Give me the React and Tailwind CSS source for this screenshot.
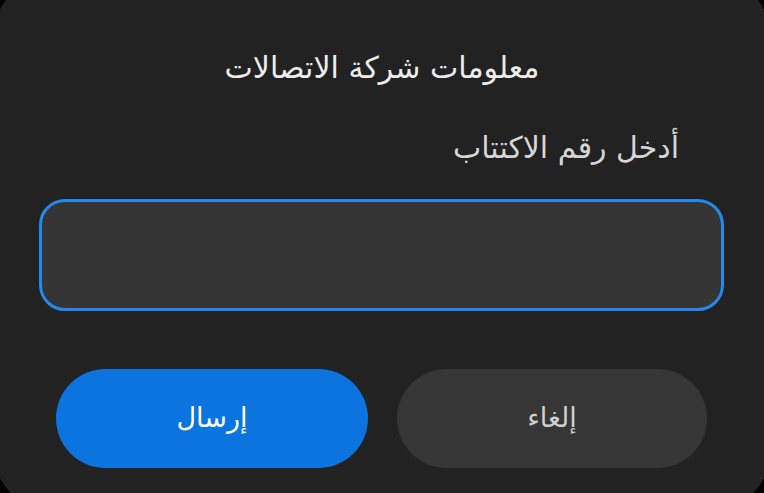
export default function App() {
  const font = { fontFamily: '"DejaVu Sans", "Noto Sans", sans-serif' };
  return (
    <div className="w-[764px] h-[493px] overflow-hidden bg-black" style={font}>
      <div dir="rtl" className="-mt-4 -mx-1 h-[520px] rounded-[44px] bg-[#222222] pt-[64px] flex flex-col">
        <div className="h-[40px] leading-[40px] text-center text-[30px] text-[#ececec]">
          معلومات شركة الاتصالات
        </div>
        <div className="mt-[40px] h-[40px] leading-[40px] pr-[89px] text-right text-[30px] text-[#d6d6d6]">
          أدخل رقم الاكتتاب
        </div>
        <div className="mt-[31px] ml-[43px] mr-[44px] h-[112px] rounded-[26px] border-[3px] border-[#2588ea] bg-[#353535]" />
        <div className="mt-[58px] ml-[60px] mr-[61px] flex gap-[29px]">
          <button className="h-[99px] w-[310px] rounded-full bg-[#363636] text-[27px] text-[#cfcfcf]">
            إلغاء
          </button>
          <button className="h-[99px] w-[312px] rounded-full bg-[#0b74df] text-[27px] text-white">
            إرسال
          </button>
        </div>
      </div>
    </div>
  );
}
